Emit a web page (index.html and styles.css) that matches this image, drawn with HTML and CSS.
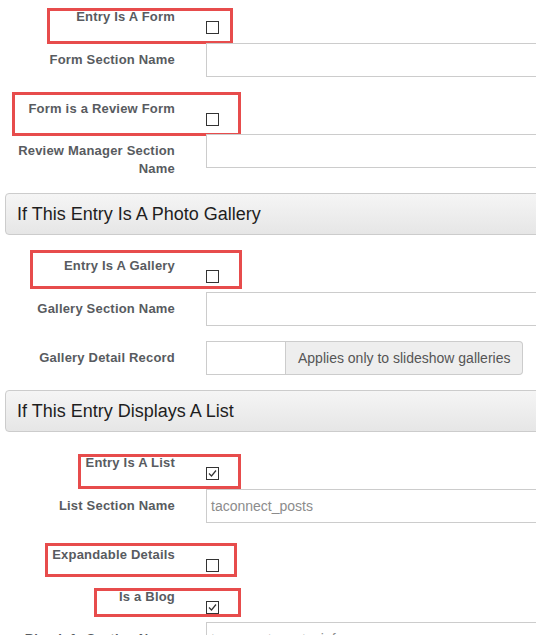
FILE: index.html
```html
<!DOCTYPE html>
<html>
<head>
<meta charset="utf-8">
<link rel="stylesheet" href="styles.css">
</head>
<body>
<div class="page">
  <div class="row mt-8">
    <span class="mark mark-form"></span>
    <div class="lbl">Entry Is A Form</div>
    <div class="ctrl"><span class="cb"></span></div>
  </div>
  <div class="row row-field mt-9">
    <div class="lbl">Form Section Name</div>
    <div class="ctrl"><div class="field"></div></div>
  </div>
  <div class="row mt-23">
    <span class="mark mark-review"></span>
    <div class="lbl">Form is a Review Form</div>
    <div class="ctrl"><span class="cb"></span></div>
  </div>
  <div class="row row-field mt-8">
    <div class="lbl">Review Manager Section Name</div>
    <div class="ctrl"><div class="field"></div></div>
  </div>

  <div class="panel-head mt-15">If This Entry Is A Photo Gallery</div>

  <div class="row mt-22">
    <span class="mark mark-gallery"></span>
    <div class="lbl">Entry Is A Gallery</div>
    <div class="ctrl"><span class="cb"></span></div>
  </div>
  <div class="row row-field mt-9">
    <div class="lbl">Gallery Section Name</div>
    <div class="ctrl"><div class="field"></div></div>
  </div>
  <div class="row row-field mt-15">
    <div class="lbl">Gallery Detail Record</div>
    <div class="ctrl">
      <div class="group">
        <div class="field field-short"></div>
        <div class="addon">Applies only to slideshow galleries</div>
      </div>
    </div>
  </div>

  <div class="panel-head mt-15">If This Entry Displays A List</div>

  <div class="row mt-22">
    <span class="mark mark-list"></span>
    <div class="lbl">Entry Is A List</div>
    <div class="ctrl"><span class="cb checked"><svg viewBox="0 0 11 11" width="11" height="11"><path d="M2 5.5 L4.5 8 L9 2.5" fill="none" stroke="#333" stroke-width="1.2"/></svg></span></div>
  </div>
  <div class="row row-field mt-9">
    <div class="lbl">List Section Name</div>
    <div class="ctrl"><div class="field">taconnect_posts</div></div>
  </div>
  <div class="row mt-23">
    <span class="mark mark-expand"></span>
    <div class="lbl">Expandable Details</div>
    <div class="ctrl"><span class="cb"></span></div>
  </div>
  <div class="row mt-16">
    <span class="mark mark-blog"></span>
    <div class="lbl">Is a Blog</div>
    <div class="ctrl"><span class="cb checked"><svg viewBox="0 0 11 11" width="11" height="11"><path d="M2 5.5 L4.5 8 L9 2.5" fill="none" stroke="#333" stroke-width="1.2"/></svg></span></div>
  </div>
  <div class="row row-field mt-8">
    <div class="lbl">Blog Info Section Name</div>
    <div class="ctrl"><div class="field">taconnect_posts_info</div></div>
  </div>
</div>
</body>
</html>
```
FILE: styles.css
```css
html, body {
  margin: 0;
  padding: 0;
  background: #fff;
  overflow: hidden;
}
body {
  font-family: "Liberation Sans", Arial, sans-serif;
}
.page {
  width: 560px;
}
.row {
  position: relative;
  display: grid;
  grid-template-columns: 175px 1fr;
  column-gap: 31px;
  align-items: start;
}
.lbl {
  text-align: right;
  font-weight: bold;
  font-size: 13px;
  line-height: 18px;
  letter-spacing: 0.2px;
  color: #585b60;
}
.row-field .lbl {
  padding-top: 8px;
}
.cb {
  display: block;
  width: 13px;
  height: 13px;
  margin-top: 13px;
  box-sizing: border-box;
  border: 1px solid #333;
  background: #fff;
}
.cb svg {
  display: block;
}
.field {
  height: 34px;
  box-sizing: border-box;
  border: 1px solid #ccc;
  padding: 0 4px;
  font-size: 14px;
  line-height: 32px;
  color: #8c8c8c;
  background: #fff;
}
.group {
  display: flex;
}
.field-short {
  width: 80px;
}
.addon {
  height: 34px;
  box-sizing: border-box;
  border: 1px solid #ccc;
  border-left: 0;
  border-radius: 0 4px 4px 0;
  background: #eee;
  padding: 0 12px;
  font-size: 14px;
  line-height: 32px;
  color: #555;
  white-space: nowrap;
}
.panel-head {
  margin-left: 5px;
  height: 42px;
  box-sizing: border-box;
  border: 1px solid #ccc;
  border-radius: 4px;
  background: linear-gradient(#f5f5f5, #e6e6e6);
  padding: 0 11px;
  font-size: 18px;
  line-height: 40px;
  color: #1e1e1e;
}
.mark {
  position: absolute;
  box-sizing: border-box;
  border: 3px solid #e74c4c;
  pointer-events: none;
}
.mark-form { left: 47px; top: 0; width: 186px; height: 36px; }
.mark-review { left: 12px; top: -8px; width: 229px; height: 44px; }
.mark-gallery { left: 30px; top: -7px; width: 212px; height: 39px; }
.mark-list { left: 78px; top: 0; width: 163px; height: 35px; }
.mark-expand { left: 45px; top: -3px; width: 192px; height: 34px; }
.mark-blog { left: 94px; top: 0; width: 147px; height: 29px; }

.mt-8 { margin-top: 8px; }
.mt-9 { margin-top: 9px; }
.mt-15 { margin-top: 15px; }
.mt-16 { margin-top: 16px; }
.mt-22 { margin-top: 22px; }
.mt-23 { margin-top: 23px; }
```
